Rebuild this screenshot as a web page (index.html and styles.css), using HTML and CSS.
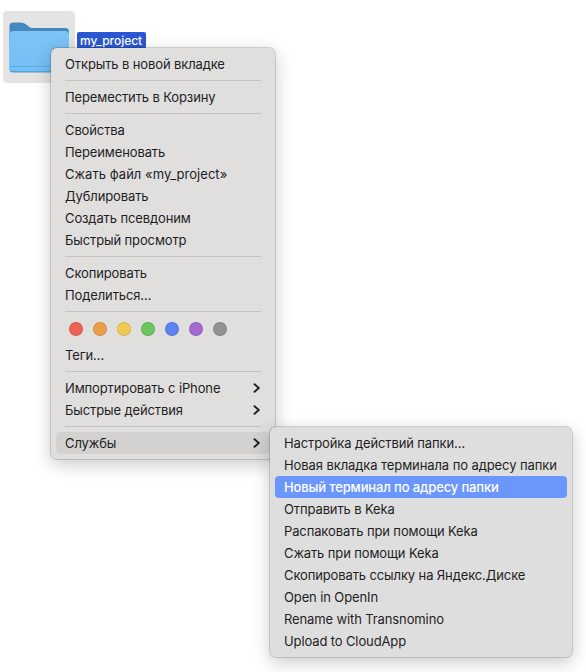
FILE: index.html
```html
<!DOCTYPE html>
<html lang="ru">
<head>
<meta charset="utf-8">
<title>Finder</title>
<link rel="stylesheet" href="styles.css">
</head>
<body>
<main class="desktop">
  <div class="file">
    <div class="file-icon">
      <svg width="72" height="72" viewBox="0 0 72 72">
        <defs>
          <linearGradient id="front" x1="0" y1="0" x2="0" y2="1"><stop offset="0" stop-color="#7cc5f7"/><stop offset="1" stop-color="#74bff5"/></linearGradient>
        </defs>
        <path d="M6.500 24V15q0-3.500 3.500-3.500H18q2.500 0 4.500 1.500l3.500 2.700q1.500 1.200 4 1.200H62q4 0 4 4V30H6.500z" fill="#4489bd"/>
        <path d="M6.500 24q0-4 4-4H62q4 0 4 4v34q0 3.500-3.500 3.500H10q-3.500 0-3.500-3.500z" fill="#4a99ce"/>
        <path d="M6.500 24q0-4 4-4H62q4 0 4 4v33q0 3.200-3.500 3.200H10q-3.500 0-3.500-3.200z" fill="url(#front)"/>
        <path d="M7 55.500H66" stroke="#5aaee6" stroke-width="1"/>
      </svg>
    </div>
    <span class="file-name">my_project</span>
  </div>

  <nav class="menu menu-main">
    <div class="item"><span>Открыть в новой вкладке</span></div>
    <hr>
    <div class="item"><span>Переместить в Корзину</span></div>
    <hr>
    <div class="item"><span>Свойства</span></div>
    <div class="item"><span>Переименовать</span></div>
    <div class="item"><span class="wide">Сжать файл «my_project»</span></div>
    <div class="item"><span>Дублировать</span></div>
    <div class="item"><span>Создать псевдоним</span></div>
    <div class="item"><span>Быстрый просмотр</span></div>
    <hr>
    <div class="item"><span>Скопировать</span></div>
    <div class="item"><span>Поделиться…</span></div>
    <hr>
    <div class="tags">
      <i class="tag red"></i><i class="tag orange"></i><i class="tag yellow"></i><i class="tag green"></i><i class="tag blue"></i><i class="tag purple"></i><i class="tag gray"></i>
    </div>
    <div class="item"><span>Теги…</span></div>
    <hr>
    <div class="item"><span>Импортировать с iPhone</span><svg class="chevron" viewBox="0 0 8 10"><path d="M1.500 1.200L5.800 5L1.500 8.800"/></svg></div>
    <div class="item"><span>Быстрые действия</span><svg class="chevron" viewBox="0 0 8 10"><path d="M1.500 1.200L5.800 5L1.500 8.800"/></svg></div>
    <hr>
    <div class="item open"><span>Службы</span><svg class="chevron" viewBox="0 0 8 10"><path d="M1.500 1.200L5.800 5L1.500 8.800"/></svg></div>
  </nav>

  <nav class="menu menu-services">
    <div class="item"><span>Настройка действий папки…</span></div>
    <div class="item"><span class="long">Новая вкладка терминала по адресу папки</span></div>
    <div class="item active"><span>Новый терминал по адресу папки</span></div>
    <div class="item"><span>Отправить в Keka</span></div>
    <div class="item"><span>Распаковать при помощи Keka</span></div>
    <div class="item"><span>Сжать при помощи Keka</span></div>
    <div class="item"><span>Скопировать ссылку на Яндекс.Диске</span></div>
    <div class="item"><span>Open in OpenIn</span></div>
    <div class="item"><span>Rename with Transnomino</span></div>
    <div class="item"><span>Upload to CloudApp</span></div>
  </nav>
</main>
</body>
</html>
```
FILE: styles.css
```css
* { box-sizing: border-box; }
body {
  margin: 0;
  background: #fff;
  font-family: Inter, "Liberation Sans", sans-serif;
  font-size: 13px;
  letter-spacing: -.12px;
  color: #1e1e1e;
}
.desktop { position: relative; width: 586px; height: 672px; overflow: hidden; }
.file { display: flex; align-items: flex-start; gap: 2px; padding: 11px 0 0 3px; }
.file-icon { width: 72px; height: 72px; border-radius: 4px; background: #e4e4e4; }
.file-icon svg { display: block; }
.file-name {
  margin-top: 21px;
  width: 69px;
  height: 17px;
  line-height: 17px;
  padding-left: 3px;
  border-radius: 2px;
  background: #2b57d2;
  color: #fff;
  font-size: 12px;
  font-weight: 500;
  letter-spacing: -.05px;
  white-space: nowrap;
}
.menu {
  position: absolute;
  padding: 5px;
  border-radius: 6px;
  background: #e0dfde;
  box-shadow: 0 0 0 1px rgba(0, 0, 0, .15), 0 5px 18px rgba(0, 0, 0, .22);
}
.menu-main { left: 51px; top: 48px; width: 224px; height: 411px; }
.menu-services { left: 270px; top: 427px; width: 302px; height: 230px; background: #dedede; }
.item {
  display: flex;
  align-items: center;
  justify-content: space-between;
  height: 22px;
  line-height: 22px;
  padding: 0 9px;
  border-radius: 4px;
  white-space: nowrap;
}
.item span { height: 22px; }
.wide { letter-spacing: .03px; }
.long { letter-spacing: -.09px; }
.open { background: #d3d2d0; }
.active { background: #6b96fc; color: #fff; font-weight: 500; letter-spacing: -.13px; }
.chevron {
  width: 8px;
  height: 10px;
  fill: none;
  stroke: #1e1e1e;
  stroke-width: 1.9;
  stroke-linecap: round;
  stroke-linejoin: round;
}
hr { height: 1px; margin: 5px 9px; border: 0; background: #c3c2c1; }
.tags { display: flex; gap: 10px; height: 27px; padding: 5px 13px 0; }
.tag { width: 14px; height: 14px; border-radius: 50%; border: 1px solid rgba(0, 0, 0, .1); }
.red { background: #ec6354; }
.orange { background: #eb9d4b; }
.yellow { background: #eecb52; }
.green { background: #6bc660; }
.blue { background: #5b83f2; }
.purple { background: #a569d0; }
.gray { background: #929295; }
```
